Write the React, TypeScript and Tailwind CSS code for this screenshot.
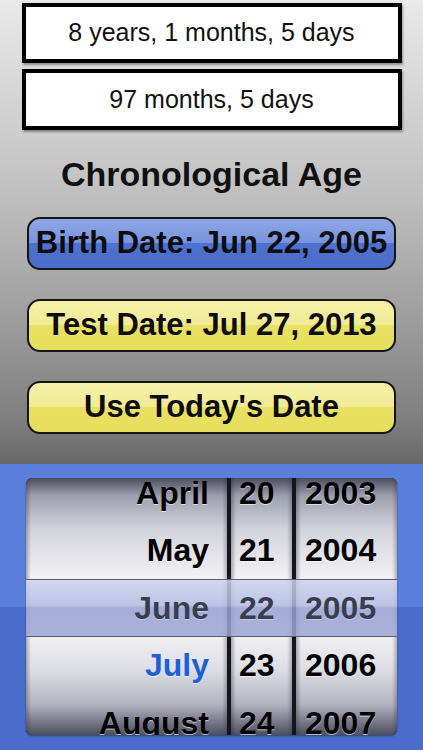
import React from "react";

const months = ["April", "May", "June", "July", "August"];
const days = ["20", "21", "22", "23", "24"];
const years = ["2003", "2004", "2005", "2006", "2007"];

function rowColor(i: number, isMonth: boolean) {
  if (i === 2) return "relative z-10 text-[#393d50] [text-shadow:0_1px_0_rgba(255,255,255,0.35)]";
  if (isMonth && i === 3) return "text-[#1f5fd6] [text-shadow:0_1px_0_rgba(255,255,255,0.6)]";
  return "text-black [text-shadow:0_1px_0_rgba(255,255,255,0.6)]";
}

function Column({
  items,
  width,
  align,
  pad,
  isMonth,
}: {
  items: string[];
  width: string;
  align: string;
  pad: string;
  isMonth?: boolean;
}) {
  return (
    <div
      className={`${width} h-full relative overflow-hidden bg-[linear-gradient(#4b4d5e_0%,#9fa0ae_7%,#d3d3dc_20%,#f4f4f6_40%,#ffffff_50%,#f0f0f3_62%,#dcdce3_75%,#b4b4c0_88%,#4c4e5e_100%)]`}
    >
      <div className="absolute inset-y-0 left-0 w-[5px] bg-[linear-gradient(90deg,rgba(40,42,60,0.35),rgba(40,42,60,0))]" />
      <div className="absolute inset-y-0 right-0 w-[5px] bg-[linear-gradient(270deg,rgba(40,42,60,0.3),rgba(40,42,60,0))]" />
      <div className="flex flex-col mt-[-14px]">
        {items.map((t, i) => (
          <div
            key={t}
            className={`h-[57.5px] flex items-center ${align} ${pad} text-[32px] font-bold leading-none ${rowColor(i, !!isMonth)}`}
          >
            {t}
          </div>
        ))}
      </div>
    </div>
  );
}

export default function App() {
  return (
    <div className="w-[423px] h-[750px] flex flex-col font-['Liberation_Sans',Arial,sans-serif] overflow-hidden">
      <div className="h-[464px] flex flex-col items-center bg-[linear-gradient(#e9e9e9_0%,#c4c4c4_38%,#9c9c9c_70%,#7c7c7c_92%,#676767_100%)]">
        <div className="mt-[3px] w-[380px] h-[60px] border-[4px] border-black bg-white flex items-center justify-center text-[25px] text-[#111] shadow-[1px_2px_2px_rgba(0,0,0,0.35)]">
          8 years, 1 months, 5 days
        </div>
        <div className="mt-[6px] w-[380px] h-[61px] border-[4px] border-black bg-white flex items-center justify-center text-[25px] text-[#111] shadow-[1px_2px_2px_rgba(0,0,0,0.35)]">
          97 months, 5 days
        </div>
        <div className="h-[87px] pt-[2px] flex items-center justify-center text-[34px] font-bold text-[#111]">
          Chronological Age
        </div>
        <div className="flex flex-col gap-[29px]">
          <div className="w-[369px] h-[53px] rounded-[13px] border-2 border-[#151515] flex items-center justify-center text-[31px] font-bold text-[#0d0d0d] bg-[linear-gradient(#8ea7e7_0%,#7893dd_50%,#4e72cf_50%,#4a6ccb_100%)]">
            Birth Date: Jun 22, 2005
          </div>
          <div className="w-[369px] h-[53px] rounded-[13px] border-2 border-[#151515] flex items-center justify-center text-[31px] font-bold text-[#0d0d0d] bg-[linear-gradient(#f5f0a8_0%,#f1eb95_50%,#eae164_50%,#e7de5d_100%)]">
            Test Date: Jul 27, 2013
          </div>
          <div className="w-[369px] h-[53px] rounded-[13px] border-2 border-[#151515] flex items-center justify-center text-[31px] font-bold text-[#0d0d0d] bg-[linear-gradient(#f5f0a8_0%,#f1eb95_50%,#eae164_50%,#e7de5d_100%)]">
            Use Today's Date
          </div>
        </div>
      </div>
      <div className="flex-1 pt-[14px] pl-[26px] bg-[linear-gradient(#5a80dc_50%,#4a6dcb_50%)]">
        <div className="relative w-[371px] h-[257px] rounded-[6px] overflow-hidden flex bg-[#1a1b22] shadow-[0_1px_2px_rgba(0,0,0,0.4)]">
          <Column items={months} width="w-[201px]" align="justify-end" pad="pr-[18px]" isMonth />
          <div className="w-[4px] h-full bg-[#15161c]" />
          <Column items={days} width="w-[61px]" align="justify-start" pad="pl-[8px]" />
          <div className="w-[4px] h-full bg-[#15161c]" />
          <Column items={years} width="w-[101px]" align="justify-start" pad="pl-[9px]" />
          <div className="absolute left-0 right-0 top-[101px] h-[57.5px] border-y border-[#5a5e70] bg-[linear-gradient(rgba(205,210,236,0.85)_0%,rgba(178,186,224,0.85)_45%,rgba(150,160,208,0.85)_50%,rgba(158,166,212,0.85)_100%)]" />
        </div>
      </div>
    </div>
  );
}
